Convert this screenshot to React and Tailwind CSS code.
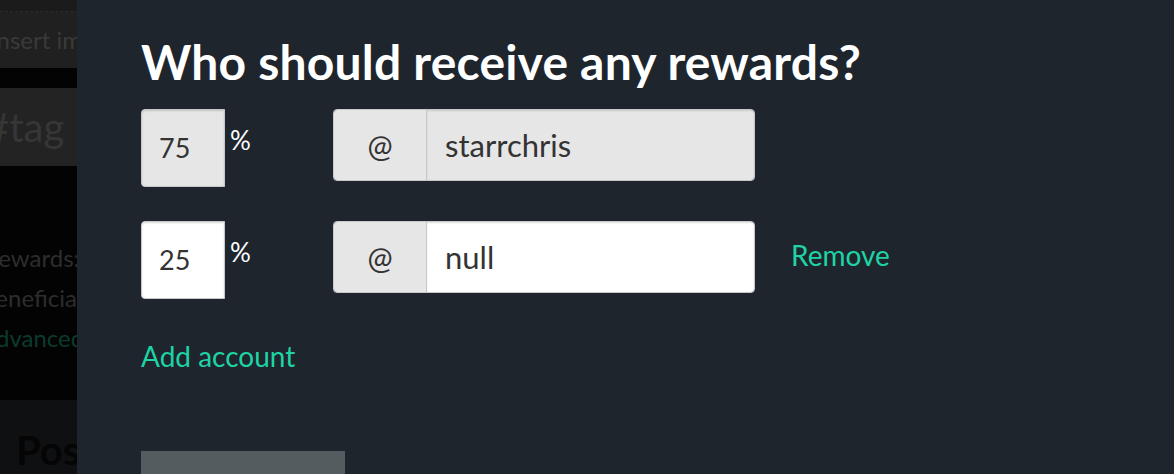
import React from 'react';

const font = { fontFamily: 'Lato, "Open Sans", sans-serif' };

const BackdropPage = () => (
  <div className="w-[77px] shrink-0 overflow-hidden bg-[#050505] h-full">
    <div className="w-[300px]">
      <div className="h-[12px] bg-[#1b1b1b] border-b border-dashed border-[#2c2c2c]" />
      <div className="h-[56px] bg-[#202020] text-[#3a3a3a] text-[24px] leading-[56px] -ml-[10px]">Insert image</div>
      <div className="h-[20px] bg-[#030303]" />
      <div className="h-[78px] bg-[#232323] text-[#363636] text-[40px] leading-[78px] -ml-[14px]">#tag</div>
      <div className="h-[234px] bg-[#030303] pt-[72px] text-[24px] leading-[40px] text-[#2d2d2d]">
        <div className="-ml-[16px]">Rewards: 50%</div>
        <div className="-ml-[20px]">Beneficiaries</div>
        <div className="-ml-[20px] text-[#0b3b2e]">Advanced</div>
      </div>
      <div className="h-[74px] bg-[#0f1012] pt-[26px] pl-[16px] text-[40px] font-bold leading-[48px] text-[#050505]">Post</div>
    </div>
  </div>
);

const PercentInput = ({ value, disabled }) => (
  <div className="flex items-start w-[192px]">
    <div
      className={`w-[84px] h-[78px] rounded-l-[4px] border border-[#c8c8c8] shadow-[inset_0_1px_2px_rgba(0,0,0,0.15)] flex items-center pl-[17px] text-[27px] text-[#333] ${disabled ? 'bg-[#e6e6e6]' : 'bg-white'}`}
    >
      {value}
    </div>
    <span className="ml-[5px] mt-[18px] text-[26px] leading-none text-white">%</span>
  </div>
);

const UserInput = ({ value, disabled }) => (
  <div className="flex h-[72px] w-[422px] rounded-[4px] border border-[#c8c8c8] overflow-hidden">
    <div className="w-[93px] bg-[#e6e6e6] border-r border-[#c8c8c8] flex items-center justify-center text-[30px] text-[#333]">@</div>
    <div
      className={`flex-1 flex items-center pl-[18px] text-[31px] text-[#333] shadow-[inset_0_1px_2px_rgba(0,0,0,0.12)] ${disabled ? 'bg-[#e6e6e6]' : 'bg-white'}`}
    >
      {value}
    </div>
  </div>
);

export default function App() {
  const rows = [
    { pct: '75', user: 'starrchris', locked: true },
    { pct: '25', user: 'null', locked: false },
  ];

  return (
    <div className="flex w-[1174px] h-[474px] overflow-hidden" style={font}>
      <BackdropPage />
      <div className="flex-1 bg-[#1e252d] pl-[64px] pt-[32px]">
        <h2 className="text-[48px] font-bold text-white leading-[60px] tracking-[0.2px]">Who should receive any rewards?</h2>
        <div className="mt-[17px] flex flex-col gap-[34px]">
          {rows.map((r) => (
            <div key={r.user} className="flex items-start">
              <PercentInput value={r.pct} disabled={r.locked} />
              <UserInput value={r.user} disabled={r.locked} />
              {!r.locked && (
                <button className="ml-[36px] mt-[16px] text-[28px] text-[#1fd3a5] leading-[36px]">Remove</button>
              )}
            </div>
          ))}
        </div>
        <button className="mt-[39px] block text-[28px] text-[#1fd3a5] leading-[36px]">Add account</button>
        <div className="mt-[77px] w-[204px] h-[40px] bg-[#555c60]" />
      </div>
    </div>
  );
}
